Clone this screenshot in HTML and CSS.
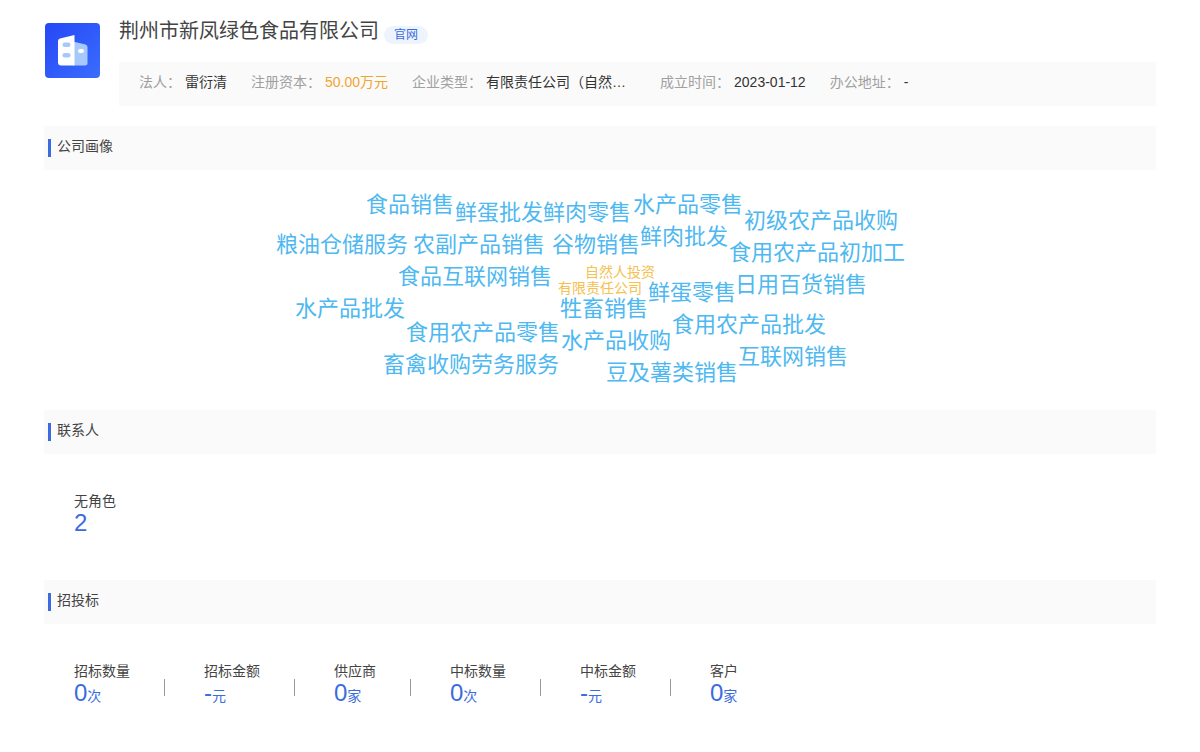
FILE: index.html
```html
<!DOCTYPE html>
<html lang="zh-CN">
<head>
<meta charset="utf-8">
<meta name="viewport" content="width=device-width, initial-scale=1">
<title>荆州市新凤绿色食品有限公司</title>
<link rel="stylesheet" href="styles.css">
</head>
<body>
<main class="page">
  <header class="company">
    <svg class="logo" viewBox="0 0 55 55" aria-hidden="true">
      <defs>
        <linearGradient id="logo-bg" x1="0" y1="0" x2="1" y2="1">
          <stop offset="0" stop-color="#2547f6"/>
          <stop offset="1" stop-color="#3a6dfd"/>
        </linearGradient>
      </defs>
      <rect width="55" height="55" rx="4" fill="url(#logo-bg)"/>
      <path d="M28 18.500 40.500 21.500Q42.500 22 42.500 24V40Q42.500 42.500 40 42.500H28Z" fill="#a6c8fb"/>
      <path d="M15 15.500 29.500 12V42.500H16Q13 42.500 13 39.500V18Q13 16 15 15.500Z" fill="#fff"/>
      <rect x="17.500" y="19.500" width="8" height="4.500" rx="2.200" fill="#a6c8fb"/>
      <rect x="17.500" y="30" width="8" height="4.500" rx="2.200" fill="#a6c8fb"/>
      <rect x="33" y="26" width="6" height="4" rx="2" fill="#fff"/>
    </svg>
    <div class="company-body">
      <div class="company-title">
        <h1 class="company-name">荆州市新凤绿色食品有限公司</h1>
        <a class="site-link" href="#">官网</a>
      </div>
      <dl class="facts">
        <div class="fact"><dt>法人：</dt><dd>雷衍清</dd></div>
        <div class="fact"><dt>注册资本：</dt><dd class="money">50.00万元</dd></div>
        <div class="fact"><dt>企业类型：</dt><dd class="clipped">有限责任公司（自然人投资或控股）</dd></div>
        <div class="fact"><dt>成立时间：</dt><dd>2023-01-12</dd></div>
        <div class="fact"><dt>办公地址：</dt><dd>-</dd></div>
      </dl>
    </div>
  </header>

  <section>
    <h2 class="section-title">公司画像</h2>
    <ul class="cloud">
      <li class="word" style="--x:-234px;--y:19px">食品销售</li>
      <li class="word" style="--x:-145px;--y:27px">鲜蛋批发</li>
      <li class="word" style="--x:-57px;--y:27px">鲜肉零售</li>
      <li class="word" style="--x:33px;--y:19px">水产品零售</li>
      <li class="word" style="--x:144px;--y:35px">初级农产品收购</li>
      <li class="word" style="--x:40px;--y:51px">鲜肉批发</li>
      <li class="word" style="--x:-324px;--y:59px">粮油仓储服务</li>
      <li class="word" style="--x:-187px;--y:59px">农副产品销售</li>
      <li class="word" style="--x:-48px;--y:59px">谷物销售</li>
      <li class="word" style="--x:129px;--y:67px">食用农产品初加工</li>
      <li class="word" style="--x:-202px;--y:91px">食品互联网销售</li>
      <li class="word kind" style="--x:-15px;--y:86px">自然人投资</li>
      <li class="word kind" style="--x:-42px;--y:102px">有限责任公司</li>
      <li class="word" style="--x:48px;--y:107px">鲜蛋零售</li>
      <li class="word" style="--x:135px;--y:99px">日用百货销售</li>
      <li class="word" style="--x:-305px;--y:123px">水产品批发</li>
      <li class="word" style="--x:-40px;--y:123px">牲畜销售</li>
      <li class="word" style="--x:72px;--y:139px">食用农产品批发</li>
      <li class="word" style="--x:-194px;--y:147px">食用农产品零售</li>
      <li class="word" style="--x:-39px;--y:155px">水产品收购</li>
      <li class="word" style="--x:138px;--y:171px">互联网销售</li>
      <li class="word" style="--x:-217px;--y:179px">畜禽收购劳务服务</li>
      <li class="word" style="--x:6px;--y:187px">豆及薯类销售</li>
    </ul>
  </section>

  <section>
    <h2 class="section-title">联系人</h2>
    <dl class="stats">
      <div class="stat"><dt>无角色</dt><dd>2</dd></div>
    </dl>
  </section>

  <section>
    <h2 class="section-title">招投标</h2>
    <dl class="stats">
      <div class="stat"><dt>招标数量</dt><dd>0<small>次</small></dd></div>
      <div class="stat"><dt>招标金额</dt><dd>-<small>元</small></dd></div>
      <div class="stat"><dt>供应商</dt><dd>0<small>家</small></dd></div>
      <div class="stat"><dt>中标数量</dt><dd>0<small>次</small></dd></div>
      <div class="stat"><dt>中标金额</dt><dd>-<small>元</small></dd></div>
      <div class="stat"><dt>客户</dt><dd>0<small>家</small></dd></div>
    </dl>
  </section>
</main>
</body>
</html>
```
FILE: styles.css
```css
* { box-sizing: border-box; }

body {
  margin: 0;
  background: #fff;
  color: #444;
  font: 14px/20px "Liberation Sans", "Noto Sans CJK SC", sans-serif;
}

h1, h2, dl, dd, ul { margin: 0; padding: 0; font-weight: 400; }

.page { padding: 16px 44px 0; }

.company {
  display: flex;
  gap: 19px;
  margin-bottom: 20px;
  padding-left: 1px;
}

.logo { flex: none; width: 55px; height: 55px; margin-top: 7px; }

.company-body { flex: 1; min-width: 0; }

.company-title {
  display: flex;
  align-items: flex-start;
  gap: 5px;
  margin-bottom: 16px;
}

.company-name { font-size: 20px; line-height: 30px; }

.site-link {
  margin-top: 10px;
  padding: 0 10px;
  border-radius: 9px;
  background: #eef4fe;
  color: #3a6be0;
  font-size: 12px;
  line-height: 18px;
  text-decoration: none;
}

.facts {
  display: flex;
  flex-wrap: wrap;
  column-gap: 24px;
  padding: 10px 20px 14px;
  background: #fafafa;
}

.fact { display: flex; gap: 4px; }
.fact dt { color: #a0a0a0; }
.fact dd { color: #333; }
.fact .money { color: #f0a52e; }

.fact .clipped {
  width: 150px;
  overflow: hidden;
  text-overflow: ellipsis;
  white-space: nowrap;
}

.section-title {
  display: flex;
  align-items: flex-start;
  gap: 6px;
  height: 44px;
  padding: 10px 4px;
  background: #fafafa;
  font-size: 14px;
}

.section-title::before {
  content: "";
  width: 3px;
  height: 18px;
  margin-top: 3px;
  background: #3a6be0;
}

.cloud { position: relative; height: 240px; list-style: none; }

.word {
  position: absolute;
  left: calc(50% + var(--x));
  top: var(--y);
  color: #4eb8f0;
  font-size: 22px;
  line-height: 32px;
  white-space: nowrap;
}

.kind { color: #f5c04e; font-size: 14px; }

.stats { display: flex; padding: 37px 30px 45px; }

.stat { display: flex; flex-direction: column; }

.stat + .stat {
  margin-left: 34px;
  padding-left: 40px;
  background: linear-gradient(#999, #999) 0 18px / 1px 17px no-repeat;
}

.stat dd { color: #3a6be0; font-size: 24px; line-height: 24px; }
.stat small { font-size: 14px; }
```
